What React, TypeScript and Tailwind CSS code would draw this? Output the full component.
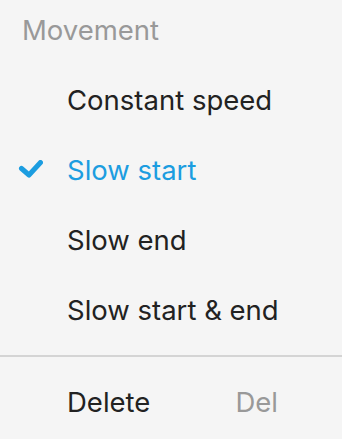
import type { ReactNode } from "react";

const font = { fontFamily: "Inter, 'Noto Sans', sans-serif" };

function Check() {
  return (
    <svg width="26" height="20" viewBox="0 0 26 20" className="absolute left-[17px] top-1/2 -translate-y-1/2">
      <path
        d="M4.5 8.5 L12 15 L23.5 2.5"
        fill="none"
        stroke="#1c9de0"
        strokeWidth="5"
        strokeLinecap="round"
        strokeLinejoin="round"
      />
    </svg>
  );
}

function Item({ children, checked }: { children: ReactNode; checked?: boolean }) {
  return (
    <div
      className={`relative flex h-[70px] items-center whitespace-nowrap pl-[67px] text-[27.5px] leading-[70px] ${
        checked ? "text-[#1c9de0]" : "text-[#222222]"
      }`}
    >
      {checked && <Check />}
      {children}
    </div>
  );
}

export default function App() {
  return (
    <div className="h-[439px] w-[342px] overflow-hidden bg-[#f5f5f5]" style={font}>
      <div className="pl-[22px] pt-[10px] text-[27.5px] leading-[40px] text-[#999999]">Movement</div>
      <div className="mt-[15px]">
        <Item>Constant speed</Item>
        <Item checked>Slow start</Item>
        <Item>Slow end</Item>
        <Item>Slow start &amp; end</Item>
      </div>
      <div className="my-[10px] h-[2px] bg-[#d4d4d4]" />
      <div className="flex h-[70px] items-center justify-between whitespace-nowrap pl-[67px] pr-[64px] text-[27.5px] leading-[70px]">
        <span className="text-[#222222]">Delete</span>
        <span className="text-[#999999]">Del</span>
      </div>
    </div>
  );
}
